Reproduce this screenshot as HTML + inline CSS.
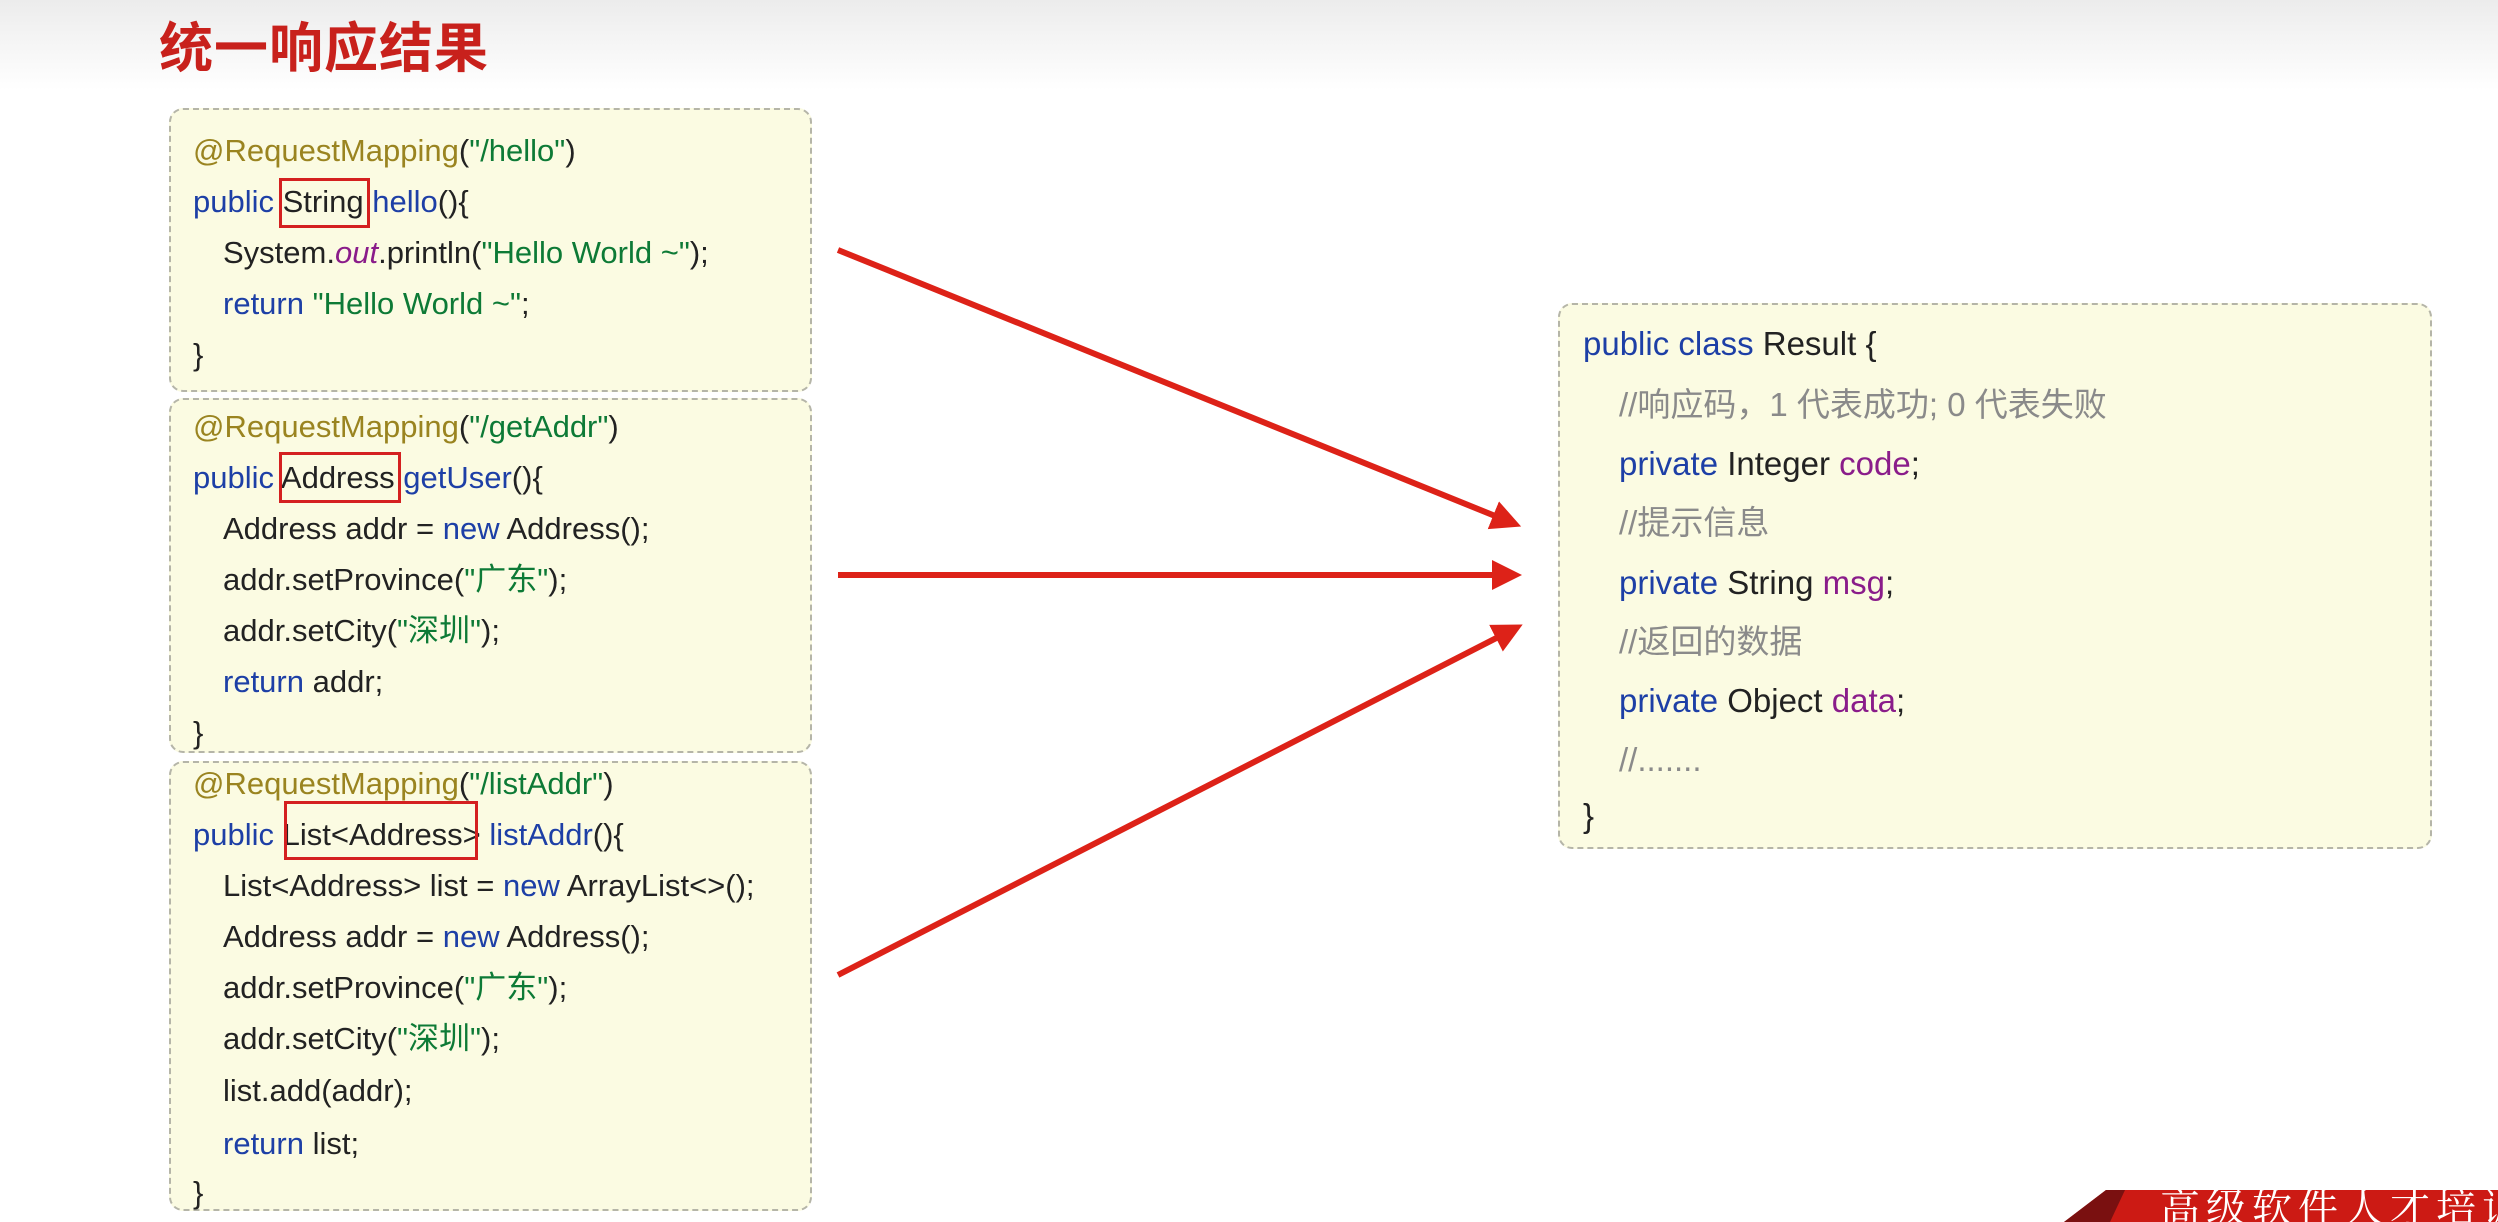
<!DOCTYPE html>
<html><head><meta charset="utf-8"><style>
body{margin:0;width:2498px;height:1222px;overflow:hidden;background:linear-gradient(#ececec 0,#fff 90px);position:relative;font-family:"Liberation Sans","Noto Sans CJK SC",sans-serif;}
.t{position:absolute;left:159px;top:4px;font-size:54px;font-weight:bold;color:#c8211c;font-family:"Liberation Sans","Noto Sans CJK SC",sans-serif;letter-spacing:1px}
.box{position:absolute;background:#fbfbe2;border:2px dashed #b5b5a8;border-radius:14px;box-sizing:border-box}
.l{position:absolute;font-size:31px;white-space:nowrap;color:#222;line-height:36px;transform:translateY(-18px)}
.r .l{font-size:33px}
.a{color:#9a8420}.k{color:#1d3fa6}.s{color:#0d7a36}.p{color:#8a1c8a}.c{color:#8a8a8a}.i{font-style:italic}
.rb{position:absolute;border:3px solid #d42020;box-sizing:border-box}
</style></head><body>
<div class="t">统一响应结果</div>

<div class="box" style="left:169px;top:108px;width:643px;height:284px"></div>
<div class="box" style="left:169px;top:398px;width:643px;height:355px"></div>
<div class="box" style="left:169px;top:761px;width:643px;height:450px"></div>
<div class="box r" style="left:1558px;top:303px;width:874px;height:546px"></div>

<div class="l" style="left:193px;top:151px"><span class="a">@RequestMapping</span>(<span class="s">"/hello"</span>)</div>
<div class="l" style="left:193px;top:202px"><span class="k">public</span> String <span class="k">hello</span>(){</div>
<div class="l" style="left:223px;top:253px">System.<span class="p i">out</span>.println(<span class="s">"Hello World ~"</span>);</div>
<div class="l" style="left:223px;top:304px"><span class="k">return</span> <span class="s">"Hello World ~"</span>;</div>
<div class="l" style="left:193px;top:355px">}</div>

<div class="l" style="left:193px;top:427px"><span class="a">@RequestMapping</span>(<span class="s">"/getAddr"</span>)</div>
<div class="l" style="left:193px;top:478px"><span class="k">public</span> Address <span class="k">getUser</span>(){</div>
<div class="l" style="left:223px;top:529px">Address addr = <span class="k">new</span> Address();</div>
<div class="l" style="left:223px;top:580px">addr.setProvince(<span class="s">"广东"</span>);</div>
<div class="l" style="left:223px;top:631px">addr.setCity(<span class="s">"深圳"</span>);</div>
<div class="l" style="left:223px;top:682px"><span class="k">return</span> addr;</div>
<div class="l" style="left:193px;top:733px">}</div>

<div class="l" style="left:193px;top:784px"><span class="a">@RequestMapping</span>(<span class="s">"/listAddr"</span>)</div>
<div class="l" style="left:193px;top:835px"><span class="k">public</span> List&lt;Address&gt; <span class="k">listAddr</span>(){</div>
<div class="l" style="left:223px;top:886px">List&lt;Address&gt; list = <span class="k">new</span> ArrayList&lt;&gt;();</div>
<div class="l" style="left:223px;top:937px">Address addr = <span class="k">new</span> Address();</div>
<div class="l" style="left:223px;top:988px">addr.setProvince(<span class="s">"广东"</span>);</div>
<div class="l" style="left:223px;top:1039px">addr.setCity(<span class="s">"深圳"</span>);</div>
<div class="l" style="left:223px;top:1091px">list.add(addr);</div>
<div class="l" style="left:223px;top:1144px"><span class="k">return</span> list;</div>
<div class="l" style="left:193px;top:1193px">}</div>

<div class="rb" style="left:279px;top:178px;width:91px;height:50px"></div>
<div class="rb" style="left:279px;top:452px;width:122px;height:51px"></div>
<div class="rb" style="left:284px;top:801px;width:194px;height:59px"></div>

<div class="r">
<div class="l" style="left:1583px;top:344px"><span class="k">public class</span> Result {</div>
<div class="l c" style="left:1619px;top:405px">//响应码，1 代表成功; 0 代表失败</div>
<div class="l" style="left:1619px;top:464px"><span class="k">private</span> Integer <span class="p">code</span>;</div>
<div class="l c" style="left:1619px;top:523px">//提示信息</div>
<div class="l" style="left:1619px;top:583px"><span class="k">private</span> String <span class="p">msg</span>;</div>
<div class="l c" style="left:1619px;top:642px">//返回的数据</div>
<div class="l" style="left:1619px;top:701px"><span class="k">private</span> Object <span class="p">data</span>;</div>
<div class="l c" style="left:1619px;top:760px">//.......</div>
<div class="l" style="left:1583px;top:816px">}</div>
</div>

<svg style="position:absolute;left:0;top:0" width="2498" height="1222">
<defs><marker id="m" markerWidth="6" markerHeight="6" refX="3" refY="3" orient="auto" markerUnits="strokeWidth"><path d="M0,0.5 L5,3 L0,5.5 z" fill="#dd2218"/></marker></defs>
<g stroke="#dd2218" stroke-width="6" fill="none" marker-end="url(#m)">
<line x1="838" y1="250" x2="1510" y2="522"/>
<line x1="838" y1="575" x2="1510" y2="575"/>
<line x1="838" y1="975" x2="1512" y2="630"/>
</g>
<polygon points="2106,1190 2498,1190 2498,1222 2064,1222" fill="#cc1a14"/>
<polygon points="2106,1190 2125,1190 2110,1222 2064,1222" fill="#7a1010"/>
<text x="2160" y="1222" font-size="40" fill="#fff" font-family="Noto Serif CJK SC,serif" letter-spacing="6">高级软件人才培训</text>
</svg>
</body></html>
